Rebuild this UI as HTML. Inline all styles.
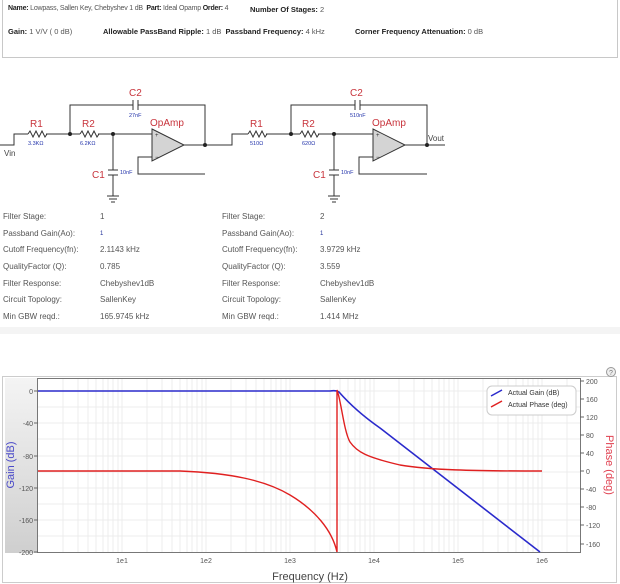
<!DOCTYPE html>
<html><head><meta charset="utf-8"><style>
body{margin:0;width:620px;height:584px;background:#fff;font-family:"Liberation Sans",sans-serif;overflow:hidden;position:relative}
.hdr{position:absolute;left:2px;top:0;width:614px;height:57px;border:1px solid #c8c8c8;border-top:none;font-size:7.5px;color:#555}
.hdr span{position:absolute;white-space:nowrap}
.hdr b{color:#222}
.tbl{position:absolute;font-size:8px;color:#555;white-space:nowrap}
.tbl div{height:16.7px;line-height:16.7px}
</style></head><body>
<div class="hdr">
<span style="left:5px;top:5px;font-size:7px;letter-spacing:-0.2px"><b>Name:</b> Lowpass, Sallen Key, Chebyshev 1 dB &nbsp;<b>Part:</b> Ideal Opamp <b>Order:</b> 4</span>
<span style="left:247px;top:5px"><b>Number Of Stages:</b> 2</span>
<span style="left:5px;top:27px"><b>Gain:</b> 1 V/V ( 0 dB)</span>
<span style="left:100px;top:27px"><b>Allowable PassBand Ripple:</b> 1 dB &nbsp;<b>Passband Frequency:</b> 4 kHz</span>
<span style="left:352px;top:27px"><b>Corner Frequency Attenuation:</b> 0 dB</span>
</div>

<svg style="position:absolute;left:0;top:0" width="620" height="210" font-family="Liberation Sans,sans-serif">
<g fill="none" stroke="#333" stroke-width="1">
<path d="M0,145H14V134H28M46,134H80M98,134H152M70,134V105H133M138,105H205V145M113,134V170M113,175V196M107,196h12M109,199h8M111,202h4M152,157H138V174H205M184,145H232V134H248M266,134H300M318,134H373M291,134V105H355M360,105H427V145M334,134V170M334,175V196M328,196h12M330,199h8M332,202h4M373,157H359V174H427M405,145H445"/>
<path d="M28,134l2,-3l3,6l3,-6l3,6l3,-6l3,6l2,-3M80,134l2,-3l3,6l3,-6l3,6l3,-6l3,6l2,-3M248,134l2,-3l3,6l3,-6l3,6l3,-6l3,6l2,-3M300,134l2,-3l3,6l3,-6l3,6l3,-6l3,6l2,-3"/>
<path d="M133,100v10M138,100v10M355,100v10M360,100v10M108,170h10M108,175h10M329,170h10M329,175h10"/>
</g>
<path d="M152,129L184,145L152,161Z" fill="#d4d4d4" stroke="#333"/>
<path d="M373,129L405,145L373,161Z" fill="#d4d4d4" stroke="#333"/>
<g fill="#222"><circle cx="70" cy="134" r="2"/><circle cx="113" cy="134" r="2"/><circle cx="205" cy="145" r="2"/><circle cx="291" cy="134" r="2"/><circle cx="334" cy="134" r="2"/><circle cx="427" cy="145" r="2"/></g>
<g font-size="6" fill="#333"><text x="155" y="137">+</text><text x="155" y="159">−</text><text x="376" y="137">+</text><text x="376" y="159">−</text></g>
<g fill="#c8343c" font-size="10"><text x="30" y="127">R1</text><text x="82" y="127">R2</text><text x="129" y="96">C2</text><text x="150" y="126">OpAmp</text><text x="92" y="178">C1</text>
<text x="250" y="127">R1</text><text x="302" y="127">R2</text><text x="350" y="96">C2</text><text x="372" y="126">OpAmp</text><text x="313" y="178">C1</text></g>
<g fill="#2233aa" font-size="5.5"><text x="28" y="145">3.3KΩ</text><text x="80" y="145">6.2KΩ</text><text x="129" y="117">27nF</text><text x="120" y="174">10nF</text>
<text x="250" y="145">510Ω</text><text x="302" y="145">620Ω</text><text x="350" y="117">510nF</text><text x="341" y="174">10nF</text></g>
<g fill="#444" font-size="8"><text x="4" y="156">Vin</text><text x="428" y="141">Vout</text></g>
</svg>

<div class="tbl" style="left:3px;top:209px"><div>Filter Stage:</div><div>Passband Gain(Ao):</div><div>Cutoff Frequency(fn):</div><div>QualityFactor (Q):</div><div>Filter Response:</div><div>Circuit Topology:</div><div>Min GBW reqd.:</div></div>
<div class="tbl" style="left:100px;top:209px"><div>1</div><div style="color:#22339a;font-size:6px">1</div><div>2.1143 kHz</div><div>0.785</div><div>Chebyshev1dB</div><div>SallenKey</div><div>165.9745 kHz</div></div>
<div class="tbl" style="left:222px;top:209px"><div>Filter Stage:</div><div>Passband Gain(Ao):</div><div>Cutoff Frequency(fn):</div><div>QualityFactor (Q):</div><div>Filter Response:</div><div>Circuit Topology:</div><div>Min GBW reqd.:</div></div>
<div class="tbl" style="left:320px;top:209px"><div>2</div><div style="color:#22339a;font-size:6px">1</div><div>3.9729 kHz</div><div>3.559</div><div>Chebyshev1dB</div><div>SallenKey</div><div>1.414 MHz</div></div>
<div style="position:absolute;left:0;top:327px;width:620px;height:7px;background:#f4f4f4"></div>

<svg style="position:absolute;left:0;top:360px" width="620" height="224" font-family="Liberation Sans,sans-serif">
<defs><linearGradient id="g" x1="0" y1="0" x2="0" y2="1"><stop offset="0" stop-color="#f4f4f4"/><stop offset="1" stop-color="#cfcfcf"/></linearGradient></defs>
<rect x="2.5" y="16.5" width="614" height="206" fill="#fff" stroke="#ccc"/>
<rect x="5" y="18" width="32" height="175" fill="url(#g)"/>
<g transform="translate(0,-360)">
<g stroke="#ececec" stroke-width="1">
<path d="M63,378V552M78,378V552M88,378V552M96,378V552M103,378V552M108,378V552M113,378V552M118,378V552M122,378V552M147,378V552M162,378V552M172,378V552M180,378V552M187,378V552M192,378V552M197,378V552M202,378V552M206,378V552M231,378V552M246,378V552M256,378V552M264,378V552M271,378V552M276,378V552M281,378V552M286,378V552M290,378V552M315,378V552M330,378V552M340,378V552M348,378V552M355,378V552M360,378V552M365,378V552M370,378V552M374,378V552M399,378V552M414,378V552M424,378V552M432,378V552M439,378V552M444,378V552M449,378V552M454,378V552M458,378V552M483,378V552M498,378V552M508,378V552M516,378V552M523,378V552M528,378V552M533,378V552M538,378V552M542,378V552M567,378V552"/>
<path d="M37,391H580M37,407H580M37,423H580M37,439H580M37,456H580M37,472H580M37,488H580M37,504H580M37,520H580M37,536H580"/>
</g>
<rect x="37.5" y="378.5" width="543" height="174" fill="none" stroke="#777"/>
<path d="M34,391h4M34,423h4M34,456h4M34,488h4M34,520h4M34,552h4M580,381h4M580,399h4M580,417h4M580,435h4M580,453h4M580,471h4M580,489h4M580,507h4M580,525h4M580,544h4" stroke="#666"/>
<path d="M38,391H330Q336,390 339,392C346,400 360,414 380,428L540,552" fill="none" stroke="#2a2acc" stroke-width="1.6"/>
<path d="M38,471H180C230,473 265,480 290,495C315,510 332,530 337,552V390C341,400 344,432 350,442C357,452 366,457 400,465C430,470 470,471 542,471" fill="none" stroke="#e02020" stroke-width="1.4"/>
<g font-size="7" fill="#555" text-anchor="end"><text x="33" y="394">0</text><text x="33" y="426">-40</text><text x="33" y="459">-80</text><text x="33" y="491">-120</text><text x="33" y="523">-160</text><text x="33" y="555">-200</text></g>
<g font-size="7" fill="#555"><text x="586" y="384">200</text><text x="586" y="402">160</text><text x="586" y="420">120</text><text x="586" y="438">80</text><text x="586" y="456">40</text><text x="586" y="474">0</text><text x="586" y="492">-40</text><text x="586" y="510">-80</text><text x="586" y="528">-120</text><text x="586" y="547">-160</text></g>
<g font-size="7" fill="#555" text-anchor="middle"><text x="122" y="563">1e1</text><text x="206" y="563">1e2</text><text x="290" y="563">1e3</text><text x="374" y="563">1e4</text><text x="458" y="563">1e5</text><text x="542" y="563">1e6</text></g>
<text x="310" y="580" font-size="11" fill="#444" text-anchor="middle">Frequency (Hz)</text>
<text transform="translate(14,465) rotate(-90)" font-size="11" fill="#4a4ac8" text-anchor="middle">Gain (dB)</text>
<text transform="translate(606,465) rotate(90)" font-size="11" fill="#e04050" text-anchor="middle">Phase (deg)</text>
<rect x="487" y="386" width="89" height="29" rx="5" fill="#fff" stroke="#ccc"/>
<path d="M491,396l11,-6" stroke="#2a2acc" stroke-width="1.5"/><path d="M491,407l11,-6" stroke="#e02020" stroke-width="1.5"/>
<g font-size="7" fill="#333"><text x="508" y="395">Actual Gain (dB)</text><text x="508" y="407">Actual Phase (deg)</text></g>
<circle cx="611" cy="372" r="4.5" fill="#eee" stroke="#999"/><text x="611" y="375" font-size="7" fill="#777" text-anchor="middle">?</text>
</g>
</svg>
</body></html>
